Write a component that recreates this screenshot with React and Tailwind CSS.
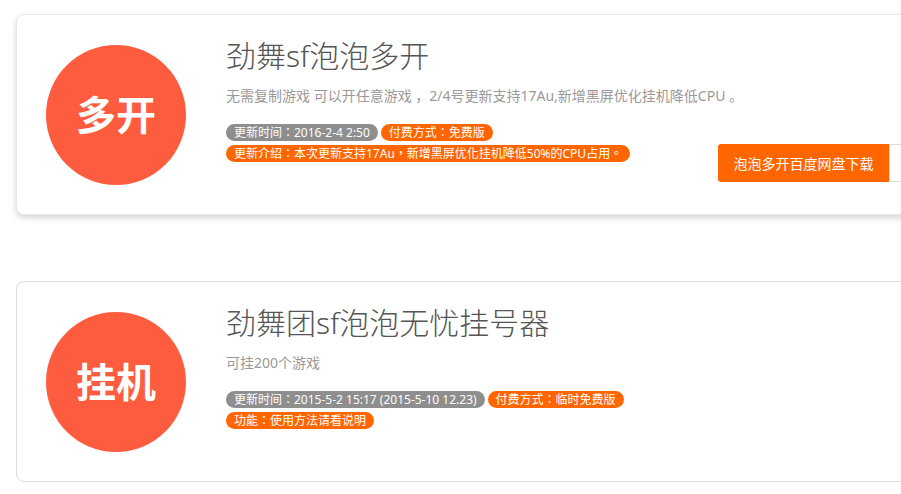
import React from 'react';

const font = { fontFamily: '"Noto Sans", "Noto Sans CJK SC", sans-serif' };
const tagFont = { fontFamily: '"Noto Sans", "Noto Sans CJK TC", sans-serif' };

const tools = [
  {
    badge: '多开',
    title: '劲舞sf泡泡多开',
    desc: '无需复制游戏 可以开任意游戏 ，2/4号更新支持17Au,新增黑屏优化挂机降低CPU 。',
    rows: [
      [
        { text: '更新时间：2016-2-4 2:50', gray: true },
        { text: '付费方式：免费版' },
      ],
      [{ text: '更新介绍：本次更新支持17Au，新增黑屏优化挂机降低50%的CPU占用。' }],
    ],
    download: '泡泡多开百度网盘下载',
    shadow: true,
  },
  {
    badge: '挂机',
    title: '劲舞团sf泡泡无忧挂号器',
    desc: '可挂200个游戏',
    rows: [
      [
        { text: '更新时间：2015-5-2 15:17 (2015-5-10 12.23)', gray: true },
        { text: '付费方式：临时免费版' },
      ],
      [{ text: '功能：使用方法请看说明' }],
    ],
  },
];

function Tag({ text, gray }) {
  return (
    <span
      style={tagFont}
      className={`inline-flex items-center h-[17px] px-[8px] rounded-full text-[12px] leading-none text-white ${
        gray ? 'bg-[#8e8e8e]' : 'bg-[#ff6600]'
      }`}
    >
      {text}
    </span>
  );
}

function ToolCard({ tool }) {
  return (
    <div
      className={`flex h-[201px] w-[1000px] rounded-[8px] bg-white border ${
        tool.shadow ? 'border-[#e8e8e8] shadow-[0_3px_6px_rgba(0,0,0,0.16)]' : 'border-[#dcdcdc]'
      }`}
    >
      {/* badge */}
      <div className="shrink-0 pl-[29px] pt-[30px]">
        <div className="w-[140px] h-[140px] rounded-full bg-[#fd5c3e] flex items-center justify-center">
          <span className="text-white font-bold text-[40px] leading-none">{tool.badge}</span>
        </div>
      </div>

      {/* text */}
      <div className="shrink-0 w-[532px] pl-[40px] pt-[23px]">
        <h2 className="text-[30px] leading-[36px] font-light text-[#555]">{tool.title}</h2>
        <p className="mt-[12px] text-[14px] leading-[20px] text-[#999] whitespace-nowrap">{tool.desc}</p>
        <div className="mt-[18px] flex flex-col gap-[4px]">
          {tool.rows.map((row, i) => (
            <div key={i} className="flex gap-[3px] whitespace-nowrap">
              {row.map((t) => (
                <Tag key={t.text} {...t} />
              ))}
            </div>
          ))}
        </div>
      </div>

      {/* download */}
      {tool.download && (
        <div className="self-end pb-[32px] flex">
          <button className="h-[38px] w-[171px] bg-[#ff6600] text-white text-[14px] rounded-l-[3px]">
            {tool.download}
          </button>
          <div className="h-[38px] w-[120px] bg-white border border-[#ddd]" />
        </div>
      )}
    </div>
  );
}

export default function App() {
  return (
    <div className="w-full h-[494px] overflow-hidden bg-white" style={font}>
      <div className="pl-[16px] pt-[14px] flex flex-col gap-[66px]">
        {tools.map((t) => (
          <ToolCard key={t.title} tool={t} />
        ))}
      </div>
    </div>
  );
}
